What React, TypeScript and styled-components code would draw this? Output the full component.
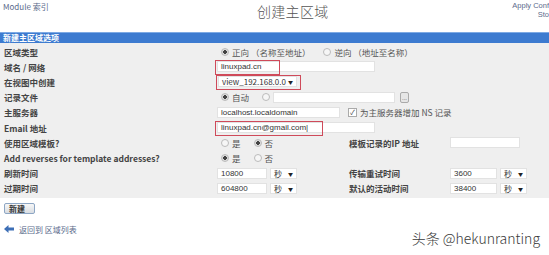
import styled, { createGlobalStyle } from "styled-components";

const GlobalStyle = createGlobalStyle`
  body {
    margin: 0;
    background: #ffffff;
    font-family: "Noto Sans CJK SC", "Liberation Sans", sans-serif;
    color: #333;
  }
`;

const Page = styled.div`
  width: 549px;
  height: 255px;
  overflow: hidden;
  position: relative;
`;

const Header = styled.div`
  display: grid;
  grid-template-columns: 220px 1fr 60px;
  height: 32px;
`;

const ModuleLink = styled.div`
  font-size: 8px;
  color: #5b6b8c;
  padding: 2px 0 0 3px;
  line-height: 10px;
`;

const Title = styled.div`
  font-size: 14px;
  font-weight: 300;
  color: #555;
  padding: 3px 0 0 37px;
  letter-spacing: 0.3px;
  line-height: 16px;
`;

const ApplyLinks = styled.div`
  font-family: "Liberation Sans", sans-serif;
  font-size: 7.5px;
  color: #5b6b8c;
  line-height: 9px;
  padding-top: 1px;
  white-space: nowrap;
  display: flex;
  flex-direction: column;
  align-items: flex-end;
`;

const SectionBar = styled.div`
  height: 10px;
  background: #3d7bd0;
  border-top: 1px solid #7eaae4;
  color: #fff;
  font-weight: bold;
  font-size: 8px;
  line-height: 10px;
  padding-left: 3px;
`;

const Panel = styled.div`
  background: #efefef;
  display: grid;
  grid-template-columns: 217px 128px 105px 1fr;
  grid-auto-rows: 15.2px;
  padding: 1px 0 2px;
`;

const Label = styled.div`
  font-size: 8.5px;
  font-weight: 600;
  color: #444;
  padding-left: 4px;
  display: flex;
  align-items: center;
  white-space: nowrap;
`;

const Cell = styled.div<{ $span?: boolean }>`
  display: flex;
  align-items: center;
  gap: 3px;
  font-size: 8.5px;
  color: #444;
  white-space: nowrap;
  grid-column: ${(p) => (p.$span ? "2 / 5" : "auto")};
`;

const TextBox = styled.div<{ $w: number; $mark?: number }>`
  width: ${(p) => p.$w}px;
  height: 11px;
  background: #fff;
  border: 1px solid #e2e2e2;
  box-sizing: border-box;
  font-family: "Liberation Sans", sans-serif;
  font-size: 8px;
  line-height: 9px;
  padding-left: 3px;
  color: #333;
  position: relative;
  &::after {
    content: "";
    display: ${(p) => (p.$mark ? "block" : "none")};
    position: absolute;
    left: -3px;
    top: -2px;
    width: ${(p) => p.$mark}px;
    height: 13px;
    border: 1px solid #cf4a5a;
  }
`;

const SelectBox = styled(TextBox)`
  display: flex;
  justify-content: space-between;
  padding-right: 3px;
  font-family: "Noto Sans CJK SC", "Liberation Sans", sans-serif;
`;

const Caret = styled.span`
  font-size: 5px;
  color: #222;
`;

const Radio = styled.span<{ $on?: boolean }>`
  width: 6px;
  height: 6px;
  border-radius: 50%;
  border: 1px solid #bbb;
  background: ${(p) => (p.$on ? "radial-gradient(circle, #444 0 1.6px, #ddd 2px)" : "#f6f6f6")};
  margin-left: 4px;
  flex: none;
`;

const Check = styled.span`
  width: 7px;
  height: 7px;
  border: 1px solid #aaa;
  background: #fff;
  font-size: 7px;
  line-height: 7px;
  text-align: center;
  color: #444;
  margin-left: 5px;
  flex: none;
`;

const Opt = styled.span`
  margin-right: 6px;
  color: #555;
`;

const DotsButton = styled.span`
  width: 9px;
  height: 11px;
  border: 1px solid #aaa;
  border-radius: 2px;
  background: #e6e6e6;
  font-size: 6px;
  line-height: 9px;
  text-align: center;
  color: #777;
  box-sizing: border-box;
  margin-left: 2px;
`;

const Footer = styled.div`
  padding: 5px 0 0 4px;
`;

const CreateButton = styled.div`
  width: 31px;
  height: 11px;
  border: 1px solid #8da6c4;
  border-radius: 2px;
  background: linear-gradient(#f7f7f7, #d9dde2);
  font-size: 8px;
  font-weight: bold;
  line-height: 10px;
  padding-left: 4px;
  box-sizing: border-box;
  color: #333;
`;

const BackLink = styled.div`
  display: flex;
  align-items: center;
  gap: 5px;
  margin-top: 10px;
  font-size: 8px;
  color: #5b6b8c;
`;

const Watermark = styled.div`
  position: absolute;
  right: 9px;
  bottom: 7px;
  font-size: 14px;
  color: #3a3a3a;
  font-weight: 300;
`;

const Unit = ({ w = 27 }: { w?: number }) => (
  <SelectBox $w={w}>
    <span>秒</span>
    <Caret>▼</Caret>
  </SelectBox>
);

export default function App() {
  return (
    <Page>
      <GlobalStyle />
      <Header>
        <ModuleLink>Module 索引</ModuleLink>
        <Title>创建主区域</Title>
        <ApplyLinks>
          <span>Apply Conf</span>
          <span>Sto</span>
        </ApplyLinks>
      </Header>
      <SectionBar>新建主区域选项</SectionBar>
      <Panel>
        <Label>区域类型</Label>
        <Cell $span>
          <Radio $on />
          <Opt>正向 （名称至地址）</Opt>
          <Radio />
          <Opt>逆向 （地址至名称）</Opt>
        </Cell>

        <Label>域名 / 网络</Label>
        <Cell $span>
          <TextBox $w={158} $mark={63}>linuxpad.cn</TextBox>
        </Cell>

        <Label>在视图中创建</Label>
        <Cell $span>
          <SelectBox $w={79} $mark={83} style={{ marginLeft: 1 }}>
            <span>view_192.168.0.0</span>
            <Caret>▼</Caret>
          </SelectBox>
        </Cell>

        <Label>记录文件</Label>
        <Cell $span>
          <Radio $on />
          <Opt>自动</Opt>
          <Radio />
          <TextBox $w={122} />
          <DotsButton>...</DotsButton>
        </Cell>

        <Label>主服务器</Label>
        <Cell $span>
          <TextBox $w={123}>localhost.localdomain</TextBox>
          <Check>✓</Check>
          <Opt>为主服务器增加 NS 记录</Opt>
        </Cell>

        <Label>Email 地址</Label>
        <Cell $span>
          <TextBox $w={158} $mark={106}>linuxpad.cn@gmail.com|</TextBox>
        </Cell>

        <Label>使用区域模板?</Label>
        <Cell>
          <Radio />
          <Opt>是</Opt>
          <Radio $on />
          <Opt>否</Opt>
        </Cell>
        <Label>模板记录的IP 地址</Label>
        <Cell>
          <TextBox $w={70} />
        </Cell>

        <Label>Add reverses for template addresses?</Label>
        <Cell $span>
          <Radio $on />
          <Opt>是</Opt>
          <Radio />
          <Opt>否</Opt>
        </Cell>

        <Label>刷新时间</Label>
        <Cell>
          <TextBox $w={50}>10800</TextBox>
          <Unit />
        </Cell>
        <Label>传输重试时间</Label>
        <Cell>
          <TextBox $w={47}>3600</TextBox>
          <Unit />
        </Cell>

        <Label>过期时间</Label>
        <Cell>
          <TextBox $w={50}>604800</TextBox>
          <Unit />
        </Cell>
        <Label>默认的活动时间</Label>
        <Cell>
          <TextBox $w={47}>38400</TextBox>
          <Unit />
        </Cell>
      </Panel>
      <Footer>
        <CreateButton>新建</CreateButton>
        <BackLink>
          <svg width="10" height="8" viewBox="0 0 10 8">
            <path d="M0 4 L4.5 0 V2.5 H10 V5.5 H4.5 V8 Z" fill="#3d6fb6" />
          </svg>
          <span>返回到 区域列表</span>
        </BackLink>
      </Footer>
      <Watermark>头条 @hekunranting</Watermark>
    </Page>
  );
}
